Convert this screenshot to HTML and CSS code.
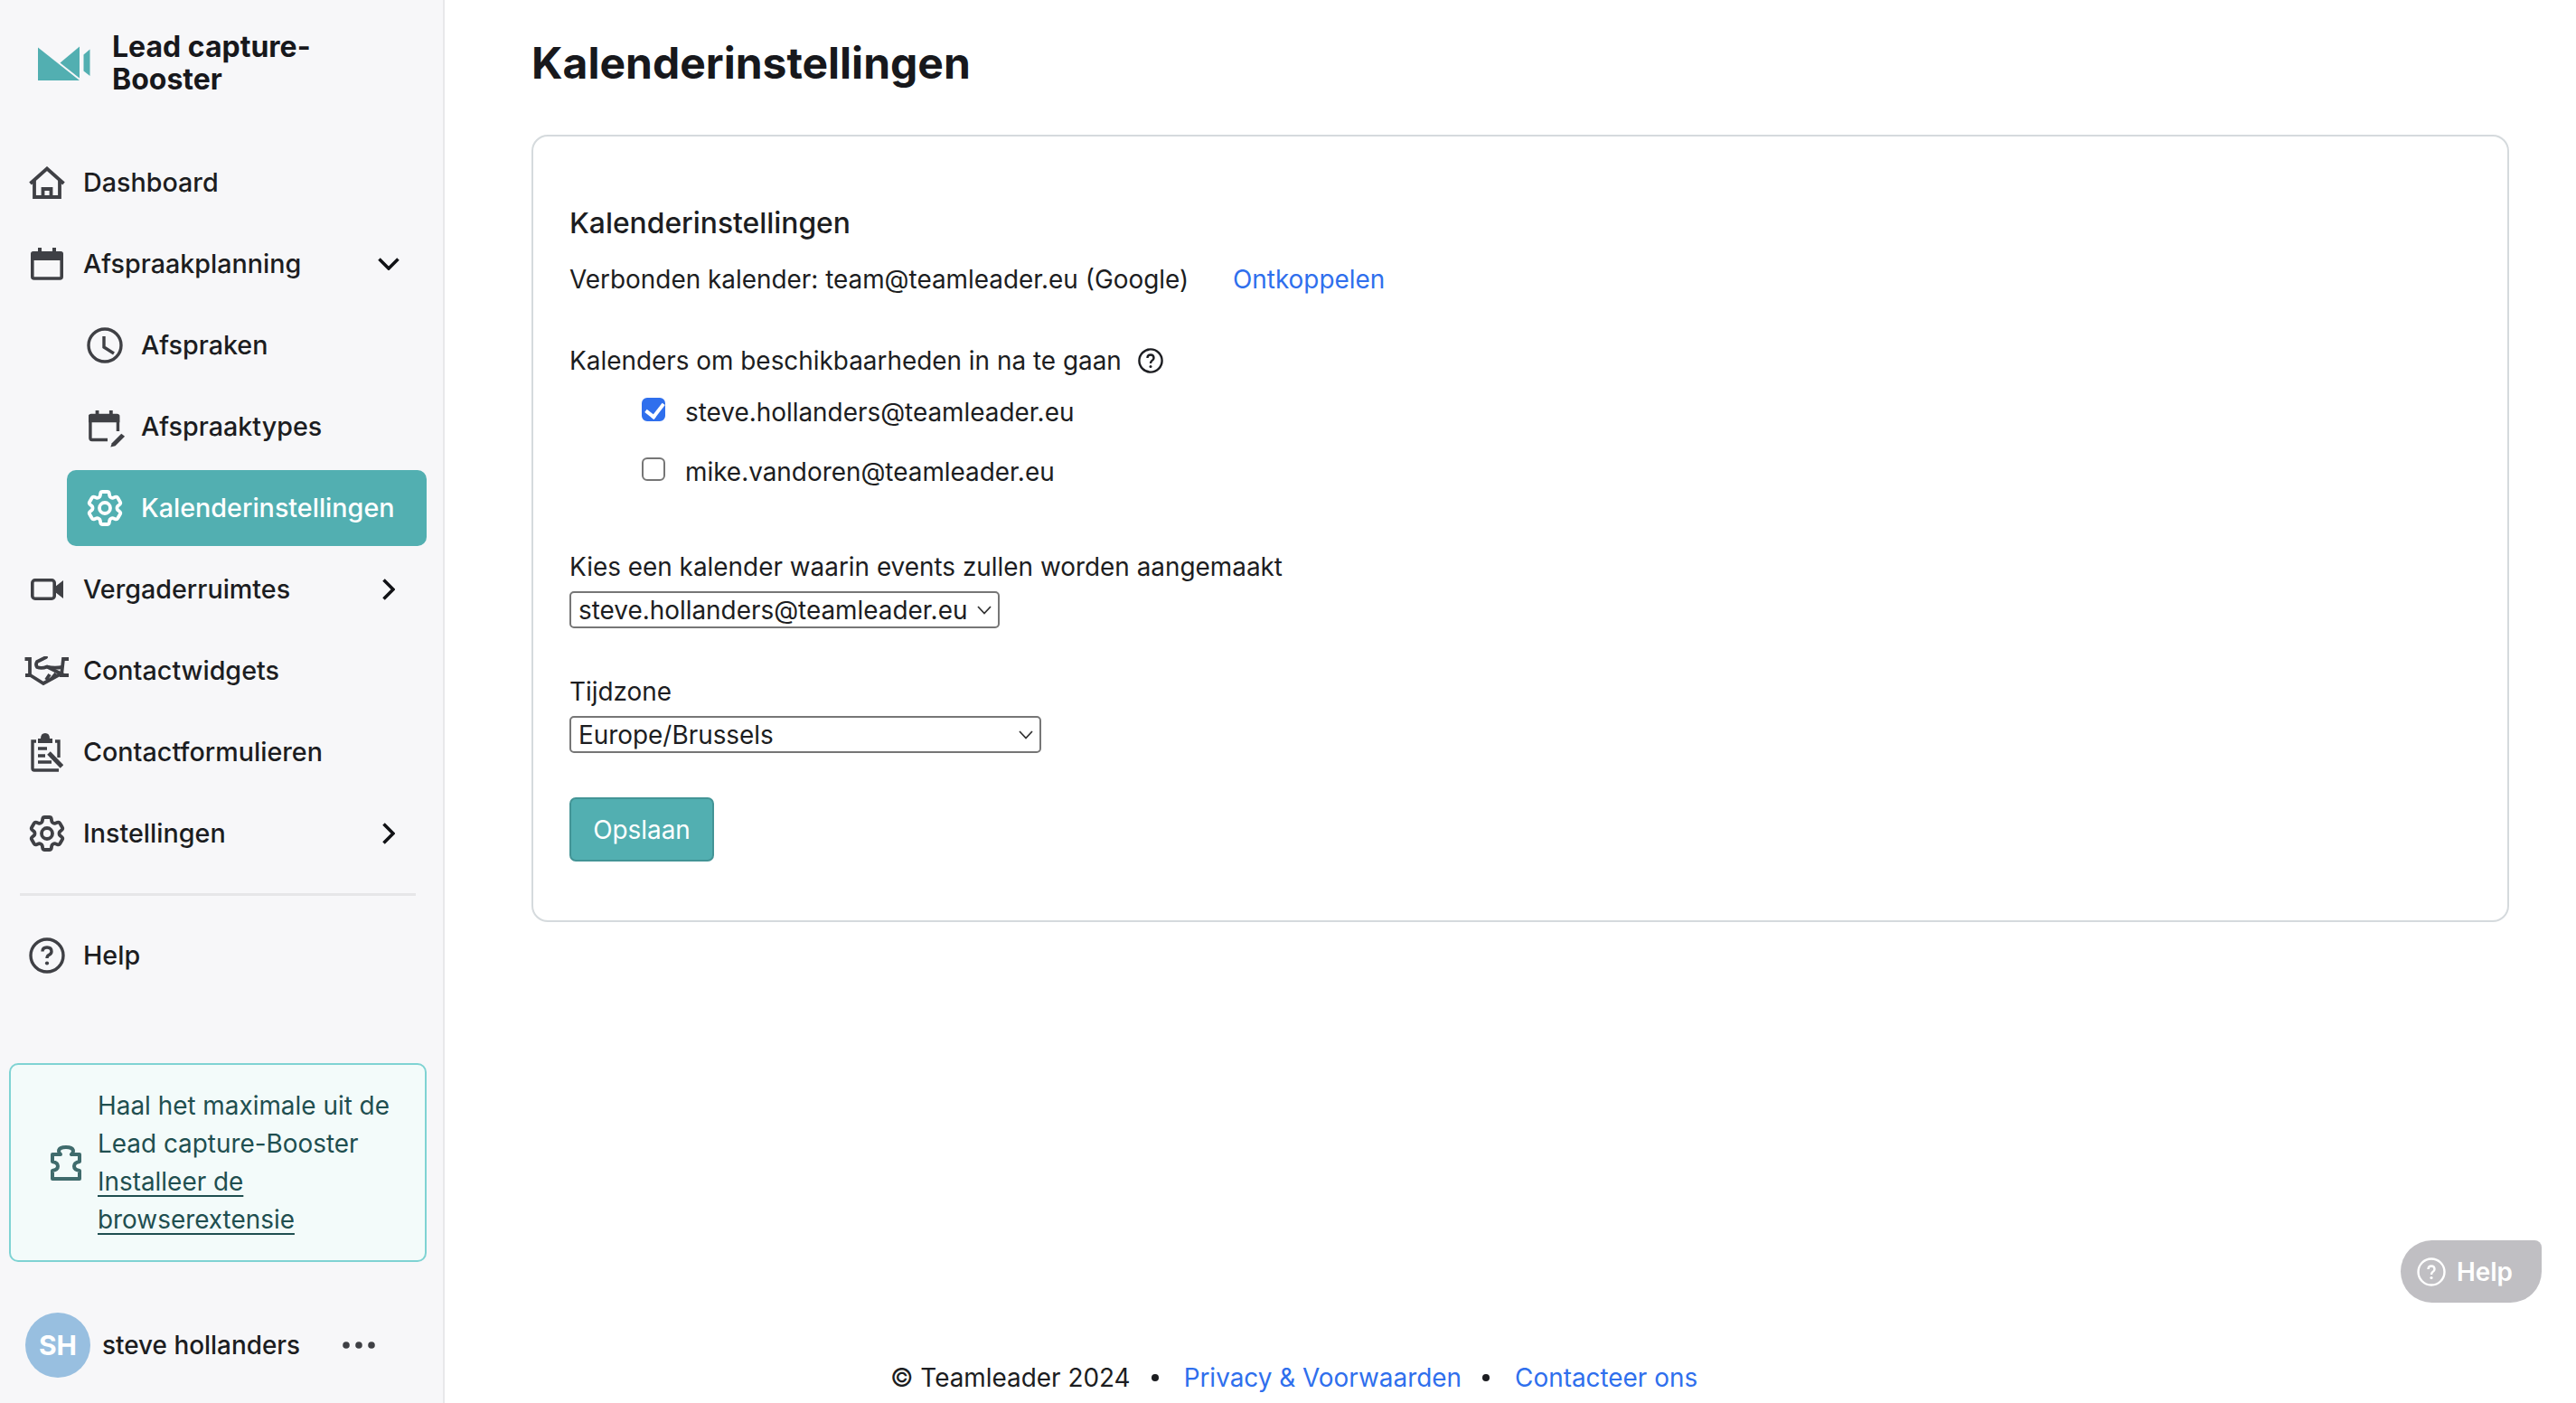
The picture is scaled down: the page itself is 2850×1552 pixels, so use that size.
FILE: index.html
```html
<!DOCTYPE html>
<html lang="nl">
<head>
    <meta charset="UTF-8">
    <meta name="viewport" content="width=device-width, initial-scale=1.0">
    <title>Kalenderinstellingen</title>
    <link rel="stylesheet" href="styles.css">
</head>
<body>
    <aside class="sidebar">
        <div class="brand">
            <svg class="brand-logo" viewBox="0 0 58 38" width="58" height="38">
                <path d="M0 1.500 L46 38 H0 Z" fill="#52afb1"/>
                <path d="M24.500 18.500 L46 0.500 V35.500 Z" fill="#52afb1"/>
                <path d="M50.500 9.500 L57.500 3.500 V33 L50.500 27.500 Z" fill="#52afb1"/>
            </svg>
            <div class="brand-name">Lead capture-<br>Booster</div>
        </div>

        <nav class="nav">
            <a href="#" class="nav-item">
                <span class="nav-icon">
                    <svg viewBox="0 0 40 36" width="40" height="36" fill="none" stroke="#3f4045" stroke-width="3.800">
                        <path d="M1.500 19 L20 2.500 L38.500 19"/>
                        <path d="M6 15 V34 H34 V15"/>
                        <path d="M15.500 34 V25 H24.500 V34"/>
                    </svg>
                </span>
                Dashboard
            </a>
            <a href="#" class="nav-item">
                <span class="nav-icon">
                    <svg viewBox="0 0 36 36" width="36" height="36" fill="none" stroke="#3f4045" stroke-width="3.600">
                        <path d="M8 0 h4 v4 h12 v-4 h4 v4 h5 a3 3 0 0 1 3 3 v7 h-36 v-7 a3 3 0 0 1 3 -3 h5 Z" fill="#3f4045" stroke="none"/>
                        <rect x="1.800" y="6" width="32.400" height="28" rx="2"/>
                    </svg>
                </span>
                Afspraakplanning
                <svg class="nav-arrow" viewBox="0 0 24 14" width="24" height="14" fill="none" stroke="#111216" stroke-width="3.600">
                    <path d="M1.500 1.500 L12 12 L22.500 1.500"/>
                </svg>
            </a>
            <a href="#" class="nav-item sub-item">
                <span class="nav-icon">
                    <svg viewBox="0 0 40 40" width="40" height="40" fill="none" stroke="#3f4045" stroke-width="3.400">
                        <circle cx="20" cy="20" r="18"/>
                        <path d="M19 10 V22 L30 29"/>
                    </svg>
                </span>
                Afspraken
            </a>
            <a href="#" class="nav-item sub-item">
                <span class="nav-icon">
                    <svg class="types-icon" viewBox="0 0 44 44" width="44" height="44" fill="none" stroke="#3f4045" stroke-width="3.600">
                        <path d="M8 0 h4 v4 h12 v-4 h4 v4 h5 a3 3 0 0 1 3 3 v7 h-36 v-7 a3 3 0 0 1 3 -3 h5 Z" fill="#3f4045" stroke="none"/>
                        <path d="M22 34 H4 a2 2 0 0 1 -2 -2 V7 h32 V24"/>
                        <path d="M27 38 L38 27 L42 30 L31 41 L25.500 42.500 Z" fill="#3f4045" stroke="none"/>
                    </svg>
                </span>
                Afspraaktypes
            </a>
            <a href="#" class="nav-item sub-item active">
                <span class="nav-icon">
                    <svg class="gear" viewBox="0 0 24 24" width="48" height="48" fill="none" stroke="#fff" stroke-width="1.900">
                        <path d="M9.594 3.940c.09-.542.56-.94 1.110-.94h2.593c.55 0 1.020.398 1.110.94l.213 1.281c.063.374.313.686.645.870.074.040.147.083.22.127.325.196.72.257 1.075.124l1.217-.456a1.125 1.125 0 011.370.49l1.296 2.247a1.125 1.125 0 01-.26 1.431l-1.003.827c-.293.241-.438.613-.43.992a7.723 7.723 0 010 .255c-.008.378.137.75.43.991l1.004.827c.424.35.534.955.26 1.430l-1.298 2.247a1.125 1.125 0 01-1.369.491l-1.217-.456c-.355-.133-.75-.072-1.076.124a6.470 6.470 0 01-.22.128c-.331.183-.581.495-.644.869l-.213 1.281c-.09.543-.56.94-1.110.94h-2.594c-.55 0-1.019-.398-1.110-.94l-.213-1.281c-.062-.374-.312-.686-.644-.87a6.520 6.520 0 01-.22-.127c-.325-.196-.72-.257-1.076-.124l-1.217.456a1.125 1.125 0 01-1.369-.49l-1.297-2.247a1.125 1.125 0 01.26-1.431l1.004-.827c.292-.24.437-.613.43-.991a6.932 6.932 0 010-.255c.007-.38-.138-.751-.43-.992l-1.004-.827a1.125 1.125 0 01-.26-1.430l1.297-2.247a1.125 1.125 0 011.370-.491l1.216.456c.356.133.751.072 1.076-.124.072-.044.146-.086.22-.128.332-.183.582-.495.644-.869l.214-1.280z"/>
                        <circle cx="12" cy="12" r="3"/>
                    </svg>
                </span>
                Kalenderinstellingen
            </a>
            <a href="#" class="nav-item">
                <span class="nav-icon">
                    <svg viewBox="0 0 36 24" width="36" height="24" fill="none" stroke="#3f4045" stroke-width="3.600">
                        <rect x="1.800" y="1.800" width="24.400" height="20.400" rx="3"/>
                        <path d="M27 9 L36 2 V22 L27 15 Z" fill="#3f4045" stroke="none"/>
                    </svg>
                </span>
                Vergaderruimtes
                <svg class="nav-arrow arrow-right" viewBox="0 0 14 24" width="14" height="24" fill="none" stroke="#111216" stroke-width="3.600">
                    <path d="M1.500 1.500 L12 12 L1.500 22.500"/>
                </svg>
            </a>
            <a href="#" class="nav-item">
                <span class="nav-icon">
                    <svg class="wide-icon" viewBox="8 12 50 33" width="50" height="33" fill="none" stroke="#3f4045" stroke-width="3.800">
                        <path d="M8.500 15 H14 V33 H9"/>
                        <path d="M57 15 H51 L49 33 H57"/>
                        <path d="M13 32 L29 42 L49 31"/>
                        <path d="M32 13 L22 18 Q20 21 22 24 Q27 26 33 23.500 L52 33" stroke-linecap="round"/>
                        <path d="M33 23.500 Q40 25.500 50 24"/>
                        <path d="M43 31 L38 37 M36 32 L32 38"/>
                    </svg>
                </span>
                Contactwidgets
            </a>
            <a href="#" class="nav-item">
                <span class="nav-icon">
                    <svg viewBox="10 5 36 44" width="36" height="44" fill="none" stroke="#3f4045" stroke-width="3.400">
                        <path d="M16 15 H12 V45 Q12 47 14 47 H41"/>
                        <path d="M37 15 H41 V33"/>
                        <path d="M18 17 V12 H21 Q21 6 26 6 Q31 6 31 12 H34 V17 Z" fill="#3f4045" stroke="none"/>
                        <path d="M18 23 H28 M18 31 H26 M18 38 H33"/>
                        <path d="M30 28 L44.500 43" stroke-width="5"/>
                    </svg>
                </span>
                Contactformulieren
            </a>
            <a href="#" class="nav-item">
                <span class="nav-icon">
                    <svg class="gear" viewBox="0 0 24 24" width="48" height="48" fill="none" stroke="#3f4045" stroke-width="1.900">
                        <path d="M9.594 3.940c.09-.542.56-.94 1.110-.94h2.593c.55 0 1.020.398 1.110.94l.213 1.281c.063.374.313.686.645.870.074.040.147.083.22.127.325.196.72.257 1.075.124l1.217-.456a1.125 1.125 0 011.370.49l1.296 2.247a1.125 1.125 0 01-.26 1.431l-1.003.827c-.293.241-.438.613-.43.992a7.723 7.723 0 010 .255c-.008.378.137.75.43.991l1.004.827c.424.35.534.955.26 1.430l-1.298 2.247a1.125 1.125 0 01-1.369.491l-1.217-.456c-.355-.133-.75-.072-1.076.124a6.470 6.470 0 01-.22.128c-.331.183-.581.495-.644.869l-.213 1.281c-.09.543-.56.94-1.110.94h-2.594c-.55 0-1.019-.398-1.110-.94l-.213-1.281c-.062-.374-.312-.686-.644-.87a6.520 6.520 0 01-.22-.127c-.325-.196-.72-.257-1.076-.124l-1.217.456a1.125 1.125 0 01-1.369-.49l-1.297-2.247a1.125 1.125 0 01.26-1.431l1.004-.827c.292-.24.437-.613.43-.991a6.932 6.932 0 010-.255c.007-.38-.138-.751-.43-.992l-1.004-.827a1.125 1.125 0 01-.26-1.430l1.297-2.247a1.125 1.125 0 011.370-.491l1.216.456c.356.133.751.072 1.076-.124.072-.044.146-.086.22-.128.332-.183.582-.495.644-.869l.214-1.280z"/>
                        <circle cx="12" cy="12" r="3"/>
                    </svg>
                </span>
                Instellingen
                <svg class="nav-arrow arrow-right" viewBox="0 0 14 24" width="14" height="24" fill="none" stroke="#111216" stroke-width="3.600">
                    <path d="M1.500 1.500 L12 12 L1.500 22.500"/>
                </svg>
            </a>
            <div class="nav-divider"></div>
            <a href="#" class="nav-item">
                <span class="nav-icon">
                    <svg viewBox="0 0 40 40" width="40" height="40" fill="none" stroke="#3f4045" stroke-width="3.400">
                        <circle cx="20" cy="20" r="18"/>
                        <path d="M15 15.500 Q15 11 20 11 Q25 11 25 15.500 Q25 18 22 19.500 Q20 20.500 20 23"/>
                        <circle cx="20" cy="28.500" r="2.100" fill="#3f4045" stroke="none"/>
                    </svg>
                </span>
                Help
            </a>
        </nav>

        <div class="promo">
            <svg class="promo-icon" viewBox="11 5 34 39" width="34" height="39" fill="none" stroke="#3f6b6c" stroke-width="4" stroke-linejoin="round">
                <path d="M13 42 V33 Q19 32 19 28 Q19 24 13 23 V15 H22 Q20 13 20 11.500 Q20 7 28 7 Q36 7 36 11.500 Q36 13 34 15 H43 V23 Q37 24 37 28 Q37 32 43 33 V42 Z"/>
            </svg>
            <div class="promo-text">
                Haal het maximale uit de<br>
                Lead capture-Booster<br>
                <a href="#">Installeer de browserextensie</a>
            </div>
        </div>

        <div class="user">
            <div class="avatar">SH</div>
            <div class="user-name">steve hollanders</div>
            <svg class="user-menu" viewBox="0 0 36 8" width="36" height="8" fill="#3f4045">
                <circle cx="4" cy="4" r="3.800"/>
                <circle cx="18" cy="4" r="3.800"/>
                <circle cx="32" cy="4" r="3.800"/>
            </svg>
        </div>
    </aside>

    <main class="main">
        <h1 class="page-title">Kalenderinstellingen</h1>

        <section class="card">
            <h2 class="card-title">Kalenderinstellingen</h2>
            <div class="connected">
                Verbonden kalender: team@teamleader.eu (Google)
                <a href="#" class="link disconnect">Ontkoppelen</a>
            </div>

            <div class="check-label">
                Kalenders om beschikbaarheden in na te gaan
                <svg viewBox="0 0 28 28" width="28" height="28" fill="none" stroke="#1c1d21" stroke-width="2.400">
                    <circle cx="14" cy="14" r="12.600"/>
                    <path d="M10.500 11 Q10.500 7.500 14 7.500 Q17.500 7.500 17.500 11 Q17.500 13 15.500 14 Q14 15 14 17"/>
                    <circle cx="14" cy="20.500" r="1.500" fill="#1c1d21" stroke="none"/>
                </svg>
            </div>
            <label class="check-row"><input type="checkbox" checked> steve.hollanders@teamleader.eu</label>
            <label class="check-row"><input type="checkbox"> mike.vandoren@teamleader.eu</label>

            <div class="field field-first">
                <label class="field-label">Kies een kalender waarin events zullen worden aangemaakt</label>
                <select class="select select-short">
                    <option>steve.hollanders@teamleader.eu</option>
                </select>
            </div>
            <div class="field">
                <label class="field-label">Tijdzone</label>
                <select class="select select-wide">
                    <option>Europe/Brussels</option>
                </select>
            </div>

            <button class="save-button">Opslaan</button>
        </section>

        <footer class="footer">
            <span>© Teamleader 2024</span>
            <span class="bullet"></span>
            <a href="#" class="link">Privacy &amp; Voorwaarden</a>
            <span class="bullet"></span>
            <a href="#" class="link">Contacteer ons</a>
        </footer>
    </main>

    <div class="help-widget">
        <svg viewBox="0 0 32 32" width="32" height="32" fill="none" stroke="#fff" stroke-width="2.400">
            <circle cx="16" cy="16" r="14.500"/>
            <path d="M12.500 13 Q12.500 9.500 16 9.500 Q19.500 9.500 19.500 13 Q19.500 15 17.500 16 Q16 17 16 19"/>
            <circle cx="16" cy="22.500" r="1.600" fill="#fff" stroke="none"/>
        </svg>
        Help
    </div>
</body>
</html>
```

FILE: styles.css
```css
* {
    box-sizing: border-box;
}
body {
    font-family: Inter, "Noto Sans", sans-serif;
    font-size: 27.9px;
    line-height: 42px;
    color: #1c1d21;
    background-color: #fff;
    margin: 0;
    height: 100vh;
    display: flex;
    overflow: hidden;
}
a {
    color: inherit;
    text-decoration: none;
}

/* sidebar */
.sidebar {
    width: 492px;
    flex-shrink: 0;
    display: flex;
    flex-direction: column;
    background-color: #f7f7f9;
    border-right: 2px solid #e8e8ea;
}
.brand {
    height: 140px;
    margin-bottom: 20px;
    padding-left: 42px;
    display: flex;
    align-items: center;
    gap: 24px;
}
.brand-name {
    font-size: 32px;
    line-height: 36px;
    font-weight: 700;
    color: #17181c;
}
.nav {
    display: flex;
    flex-direction: column;
}
.nav-item {
    height: 84px;
    margin: 0 18px 6px 0;
    padding: 0 30px 0 28px;
    display: flex;
    align-items: center;
    gap: 16px;
    font-size: 28.7px;
    font-weight: 500;
    border-radius: 10px;
}
.nav-icon {
    width: 48px;
    flex-shrink: 0;
    display: flex;
    justify-content: center;
    align-items: center;
}
.gear {
    margin: -4px;
}
.wide-icon {
    margin: 0 -2px;
}
.types-icon {
    margin: 6px 0 0 6px;
}
.nav-arrow {
    margin-left: auto;
}
.arrow-right {
    margin-right: 5px;
}
.sub-item {
    margin-left: 74px;
    padding-left: 18px;
}
.sub-item.active {
    background-color: #52afb1;
    color: #fff;
}
.nav-divider {
    height: 3px;
    margin: 18px 30px 24px 22px;
    background-color: #e6e6e8;
}
.promo {
    margin: auto 18px 0 10px;
    height: 220px;
    padding: 0 26px 0 44px;
    display: flex;
    align-items: center;
    gap: 18px;
    background-color: #f3fbfa;
    border: 2px solid #7fd3d3;
    border-radius: 10px;
    color: #1f4f50;
}
.promo-icon {
    flex-shrink: 0;
}
.promo-text a {
    text-decoration: underline;
    text-underline-offset: 5px;
}
.user {
    margin-top: 56px;
    padding: 0 0 28px 28px;
    display: flex;
    align-items: center;
    gap: 13px;
}
.avatar {
    width: 72px;
    height: 72px;
    border-radius: 50%;
    background-color: #98bfe0;
    color: #fff;
    font-size: 30px;
    font-weight: 700;
    display: flex;
    justify-content: center;
    align-items: center;
}
.user-name {
    font-weight: 500;
}
.user-menu {
    margin-left: 34px;
}

/* main */
.main {
    flex: 1;
    min-width: 0;
    padding: 0 74px 7px 96px;
    display: flex;
    flex-direction: column;
}
.page-title {
    height: 149px;
    margin: 0;
    padding-top: 40px;
    font-size: 48px;
    line-height: 60px;
    font-weight: 700;
    color: #17181c;
}
.card {
    height: 871px;
    padding: 75px 40px 0 40px;
    border: 2px solid #d5dadd;
    border-radius: 18px;
}
.card-title {
    margin: 0 0 20px;
    font-size: 31.8px;
    line-height: 42px;
    font-weight: 500;
}
.connected {
    margin-bottom: 48px;
}
.link {
    color: #2f6fed;
}
.disconnect {
    margin-left: 41px;
}
.check-label {
    margin-bottom: 15px;
    display: flex;
    align-items: center;
    gap: 18px;
}
.check-row {
    height: 42px;
    margin: 0 0 24px 80px;
    display: flex;
    align-items: center;
    gap: 22px;
}
.check-row input {
    appearance: none;
    width: 26px;
    height: 26px;
    margin: 0 0 6px;
    background-color: #fff;
    border: 2.500px solid #767676;
    border-radius: 6px;
}
.check-row input:checked {
    background-color: #2f6fed;
    border-color: #2f6fed;
}
.check-row input:checked::after {
    content: "";
    display: block;
    width: 9px;
    height: 16px;
    margin: 0 0 0 5.500px;
    border: solid #fff;
    border-width: 0 4px 4px 0;
    transform: rotate(38deg);
}
.field {
    margin-bottom: 49px;
}
.field-first {
    margin-top: 63px;
}
.field-label {
    display: block;
    margin-bottom: 6px;
}
.select {
    appearance: none;
    display: block;
    height: 41px;
    padding: 0 8px;
    font-family: inherit;
    font-size: 27.9px;
    color: #1c1d21;
    background: #fff url("data:image/svg+xml,%3Csvg xmlns='http://www.w3.org/2000/svg' width='16' height='10'%3E%3Cpath d='M1 1 L8 8.500 L15 1' fill='none' stroke='%23333' stroke-width='1.800'/%3E%3C/svg%3E") no-repeat right 7px center;
    border: 2px solid #767676;
    border-radius: 5px;
}
.select-short {
    width: 476px;
}
.select-wide {
    width: 522px;
}
.save-button {
    width: 160px;
    height: 71px;
    padding: 0;
    font-family: inherit;
    font-size: 27.9px;
    color: #fff;
    background-color: #52afb1;
    border: 2px solid #439496;
    border-radius: 7px;
}
.footer {
    margin: auto 0 0 397px;
    display: flex;
    align-items: center;
}
.bullet {
    width: 8px;
    height: 8px;
    margin: 0 28px 0 23px;
    border-radius: 50%;
    background-color: #1c1d21;
}

/* floating help button */
.help-widget {
    position: absolute;
    right: 38px;
    bottom: 111px;
    width: 156px;
    height: 69px;
    padding-left: 18px;
    display: flex;
    align-items: center;
    gap: 12px;
    font-weight: 600;
    color: #fff;
    background-color: #c0bfc3;
    border-radius: 35px 8px 35px 35px;
}
```
